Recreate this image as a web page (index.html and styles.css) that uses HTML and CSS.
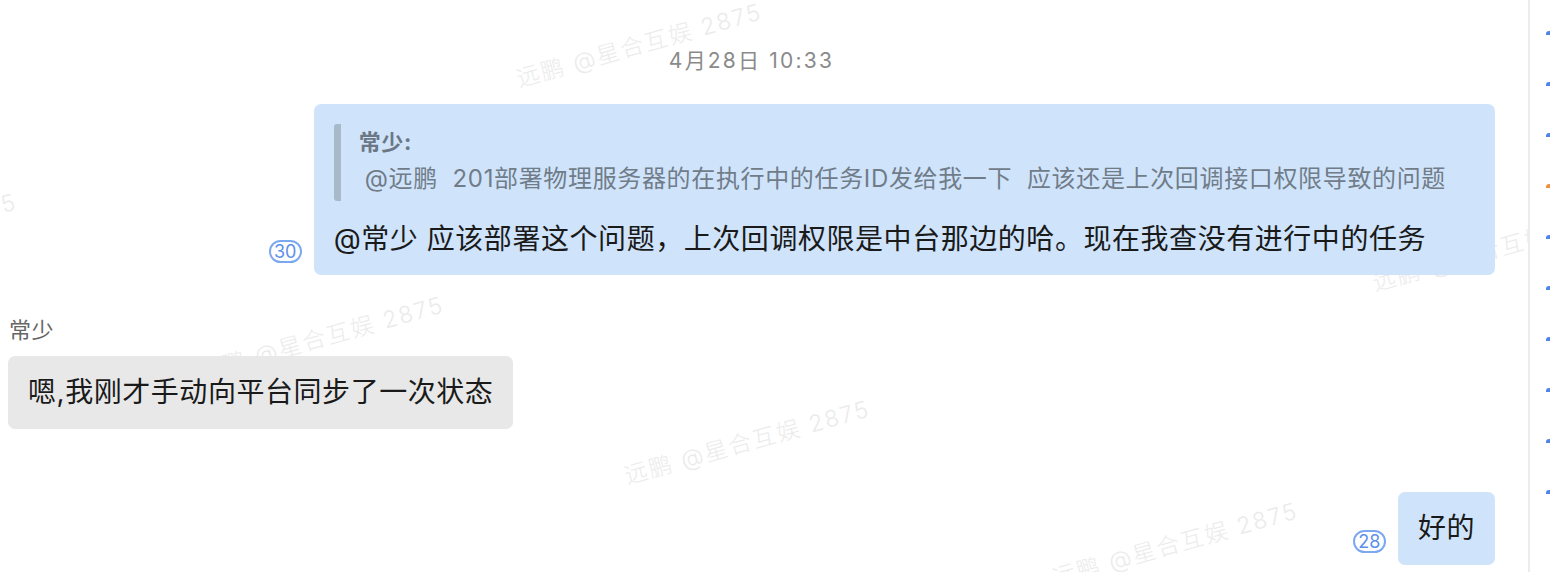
FILE: index.html
```html
<!DOCTYPE html>
<html lang="zh-CN">
<head>
  <meta charset="UTF-8">
  <title>会话</title>
  <link rel="stylesheet" href="styles.css">
</head>
<body>
  <div class="app">
    <main class="chat">
      <div class="watermarks">
        <span class="wm" style="left:-225px;top:258px">远鹏 @星合互娱 2875</span>
        <span class="wm" style="left:520px;top:68px">远鹏 @星合互娱 2875</span>
        <span class="wm" style="left:947px;top:171px">远鹏 @星合互娱 2875</span>
        <span class="wm" style="left:1376px;top:272px">远鹏 @星合互娱 2875</span>
        <span class="wm" style="left:202px;top:361px">远鹏 @星合互娱 2875</span>
        <span class="wm" style="left:628px;top:465px">远鹏 @星合互娱 2875</span>
        <span class="wm" style="left:1056px;top:567px">远鹏 @星合互娱 2875</span>
      </div>

      <div class="time">4月28日 10:33</div>

      <div class="row row-self">
        <span class="unread">30</span>
        <div class="bubble bubble-self">
          <div class="quote">
            <div class="quote-name">常少:</div>
            <div class="quote-text">@远鹏&nbsp; 201部署物理服务器的在执行中的任务ID发给我一下&nbsp; 应该还是上次回调接口权限导致的问题</div>
          </div>
          <div class="msg-text">@常少 应该部署这个问题，上次回调权限是中台那边的哈。现在我查没有进行中的任务</div>
        </div>
      </div>

      <div class="row row-other">
        <div class="sender">常少</div>
        <div class="bubble bubble-other">嗯,我刚才手动向平台同步了一次状态</div>
      </div>

      <div class="row row-self row-last">
        <span class="unread">28</span>
        <div class="bubble bubble-self">好的</div>
      </div>
    </main>

    <aside class="rail">
      <div class="rail-item"><span class="mark"></span></div>
      <div class="rail-item"><span class="mark"></span></div>
      <div class="rail-item"><span class="mark"></span></div>
      <div class="rail-item"><span class="mark mark-warn"></span></div>
      <div class="rail-item"><span class="mark"></span></div>
      <div class="rail-item"><span class="mark"></span></div>
      <div class="rail-item"><span class="mark"></span></div>
      <div class="rail-item"><span class="mark"></span></div>
      <div class="rail-item"><span class="mark"></span></div>
      <div class="rail-item"><span class="mark"></span></div>
    </aside>
  </div>
</body>
</html>
```

FILE: styles.css
```css
* {
  box-sizing: border-box;
}

body {
  margin: 0;
  background: #fff;
  font-family: Inter, "Noto Sans CJK SC", sans-serif;
  color: #1a1a1a;
  overflow: hidden;
}

.app {
  display: flex;
  height: 572px;
}

.chat {
  position: relative;
  flex: 0 0 1530px;
  height: 572px;
  padding: 46px 33px 0 8px;
  border-right: 2px solid #ececec;
  overflow: hidden;
  display: flex;
  flex-direction: column;
}

/* watermark layer sits under the messages */
.watermarks {
  position: absolute;
  inset: 0;
  pointer-events: none;
}

.wm {
  position: absolute;
  font-size: 23px;
  font-weight: 300;
  line-height: 22px;
  letter-spacing: 2px;
  white-space: nowrap;
  color: #ebebeb;
  transform-origin: 0 100%;
  transform: rotate(-15.6deg);
}

.time {
  position: relative;
  text-align: center;
  font-size: 21px;
  line-height: 30px;
  letter-spacing: 2.2px;
  color: #8a8a8a;
  margin-bottom: 28px;
}

.row {
  position: relative;
  display: flex;
}

.row-self {
  justify-content: flex-end;
  align-items: flex-end;
}

.row-other {
  flex-direction: column;
  align-items: flex-start;
  margin-top: 40px;
}

.row-last {
  margin-top: 63px;
}

.bubble {
  padding: 20px;
  border-radius: 7px;
  font-size: 28px;
  line-height: 33px;
  letter-spacing: 0.55px;
  white-space: nowrap;
}

.bubble-self {
  background: #cfe4fb;
}

.bubble-other {
  background: #e8e8e8;
}

.quote {
  border-left: 7px solid #a8b9cc;
  border-radius: 3px;
  padding: 0 29px 3px 18px;
  color: #717c89;
  font-size: 24px;
  letter-spacing: 0.65px;
}

.quote-name {
  font-weight: bold;
  font-size: 22px;
  line-height: 36px;
  color: #6c7785;
}

.quote-text {
  line-height: 38px;
  padding-left: 6px;
}

.msg-text {
  margin-top: 22px;
  margin-bottom: -1px;
}

.sender {
  font-size: 22px;
  line-height: 30px;
  letter-spacing: 0.5px;
  color: #666;
  padding-left: 1px;
  margin-bottom: 11px;
}

.unread {
  width: 33px;
  height: 23px;
  margin: 0 12px 12px 0;
  border: 2px solid #7ca8f0;
  border-radius: 12px;
  color: #5d90ea;
  font-size: 18px;
  line-height: 19px;
  text-align: center;
}

.rail {
  flex: 1;
  padding-top: 31px;
}

.rail-item {
  height: 51px;
  padding-left: 16px;
}

.mark {
  display: block;
  width: 5px;
  height: 4px;
  background: #4d86e8;
  border-top-left-radius: 3px;
}

.mark-warn {
  background: #f0913f;
}
```
